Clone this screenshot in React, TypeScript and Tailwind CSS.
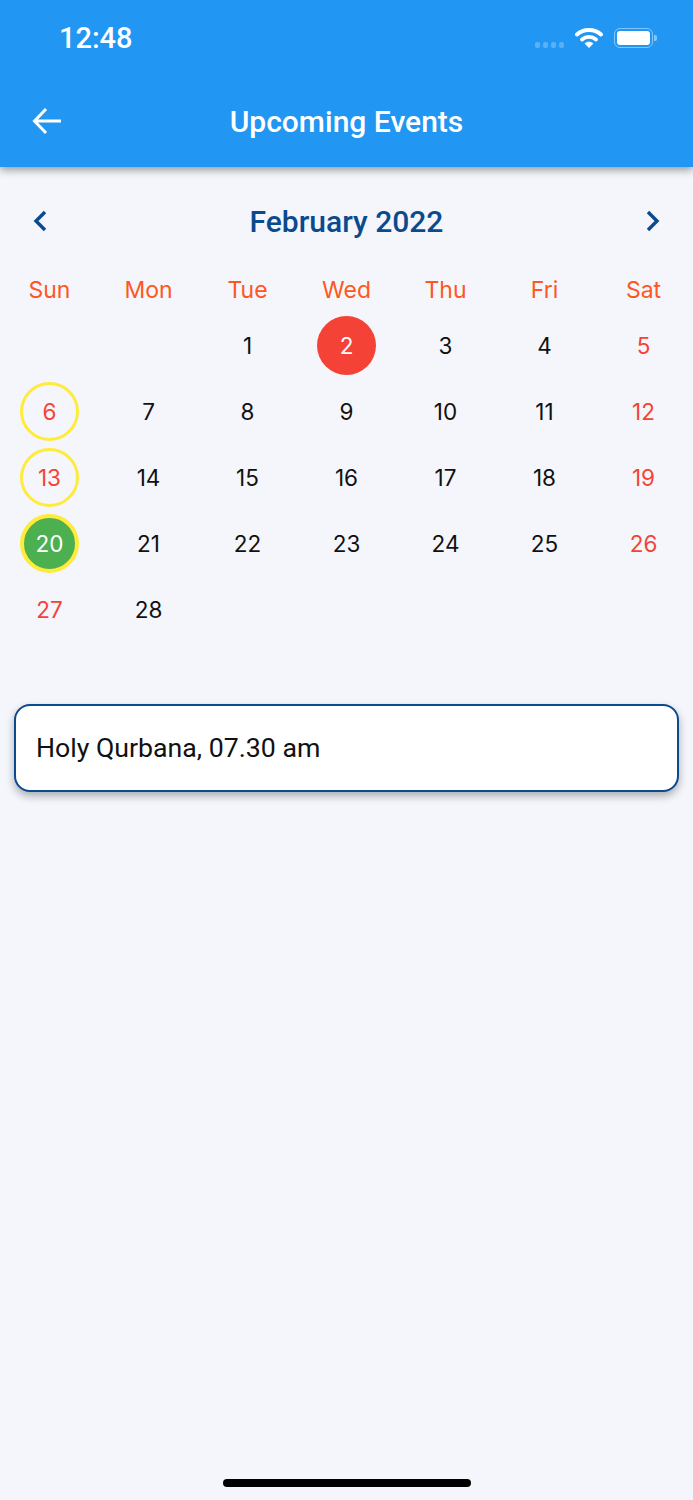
import React from "react";

const roboto = "font-['Roboto','Liberation_Sans',sans-serif]";
const inter = "font-['Inter','Liberation_Sans',sans-serif]";

const days = ["Sun", "Mon", "Tue", "Wed", "Thu", "Fri", "Sat"];
const cells: (number | null)[] = [
  null, null, 1, 2, 3, 4, 5,
  6, 7, 8, 9, 10, 11, 12,
  13, 14, 15, 16, 17, 18, 19,
  20, 21, 22, 23, 24, 25, 26,
  27, 28, null, null, null, null, null,
];

function Cell({ d, i }: { d: number | null; i: number }) {
  if (d === null) return <div className="h-[66px]" />;
  const weekend = i % 7 === 0 || i % 7 === 6;
  let cls = weekend ? "text-[#f44336]" : "text-[#111111]";
  if (d === 2) cls = "bg-[#f44336] text-white";
  else if (d === 20) cls = "bg-[#4caf50] text-white border-[4px] border-[#ffeb3b]";
  else if (d === 6 || d === 13) cls = "text-[#f44336] border-[3px] border-[#ffeb3b]";
  return (
    <div className="flex h-[66px] items-center justify-center">
      <div className={`flex h-[59px] w-[59px] items-center justify-center rounded-full pt-[2px] text-[22.5px] ${cls}`}>{d}</div>
    </div>
  );
}

export default function App() {
  return (
    <div className={`relative flex h-[1500px] w-[693px] flex-col overflow-hidden bg-[#f4f6fc] ${roboto}`}>
      <header className="z-10 h-[167px] shrink-0 bg-[#2196f3] shadow-[0_3px_8px_rgba(0,0,0,0.38)]">
        <div className="flex h-[76px] items-center justify-between pl-[59px] pr-[36px]">
          <span className="text-[29px] font-medium leading-none text-white">12:48</span>
          <div className="flex items-center">
            <div className="mt-[14px] flex gap-[3px]">
              <span className="h-[6px] w-[5px] rounded-[2px] bg-white/25" />
              <span className="h-[6px] w-[5px] rounded-[2px] bg-white/25" />
              <span className="h-[6px] w-[5px] rounded-[2px] bg-white/25" />
              <span className="h-[6px] w-[5px] rounded-[2px] bg-white/25" />
            </div>
            <svg className="ml-[11px]" width="28" height="22" viewBox="0 0 28 22" fill="none">
              <path d="M2 7.5C8.5 1.5 19.5 1.5 26 7.5" stroke="white" strokeWidth="4" strokeLinecap="round" />
              <path d="M7 12.5C11 9 17 9 21 12.5" stroke="white" strokeWidth="3.8" strokeLinecap="round" />
              <path d="M9.6 16.4C12.2 14.2 15.8 14.2 18.4 16.4L14 21Z" fill="white" />
            </svg>
            <div className="ml-[11px] flex items-center">
              <div className="flex h-[20px] w-[39px] items-center justify-center rounded-[6px] border-[1.5px] border-white/45">
                <div className="h-[14px] w-[33px] rounded-[3px] bg-white" />
              </div>
              <div className="ml-[1px] h-[6px] w-[3px] rounded-r-[2px] bg-white/45" />
            </div>
          </div>
        </div>
        <div className="relative flex h-[91px] items-center justify-center pt-[1px]">
          <svg className="absolute left-[32px] top-[30px]" width="30" height="30" viewBox="0 0 30 30" fill="none">
            <path d="M29 15H3M14 3L2.5 15L14 27" stroke="white" strokeWidth="3" />
          </svg>
          <h1 className="text-[30px] font-medium leading-none text-white">Upcoming Events</h1>
        </div>
      </header>

      <div className="flex h-[78px] shrink-0 items-center justify-between px-[30px] pt-[30px]">
        <svg width="20" height="24" viewBox="0 0 20 24" fill="none">
          <path d="M15 3L6 12L15 21" stroke="#0a4a8f" strokeWidth="3.4" />
        </svg>
        <span className="pt-[1px] text-[30px] font-medium leading-none text-[#0a4a8f]">February 2022</span>
        <svg width="20" height="24" viewBox="0 0 20 24" fill="none">
          <path d="M5 3L14 12L5 21" stroke="#0a4a8f" strokeWidth="3.4" />
        </svg>
      </div>

      <div className={`grid grid-cols-7 ${inter}`}>
        {days.map((d) => (
          <div key={d} className="flex h-[67px] items-center justify-center pt-[23px] text-[23px] text-[#ff5722]">
            {d}
          </div>
        ))}
        {cells.map((d, i) => (
          <Cell key={i} d={d} i={i} />
        ))}
      </div>

      <div className="mx-[14px] mt-[62px] flex h-[88px] items-center rounded-[16px] border-2 border-[#0a4a8f] bg-white pl-[20px] shadow-[0_4px_8px_rgba(0,0,0,0.3)]">
        <span className="text-[26.7px] leading-none text-[#111111]">Holy Qurbana, 07.30 am</span>
      </div>

      <div className="absolute bottom-[13px] left-[223px] h-[8px] w-[248px] rounded-full bg-black" />
    </div>
  );
}
